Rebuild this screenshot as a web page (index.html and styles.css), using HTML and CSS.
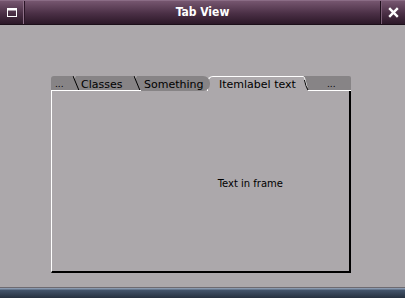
FILE: index.html
```html
<!DOCTYPE html>
<html lang="en">

<head>
	<meta charset="UTF-8" />
	<meta name="viewport" content="width=device-width, initial-scale=1.0" />
	<title>Tab View</title>
	<link rel="stylesheet" href="styles.css">
</head>

<body>
	<div class="window">
		<div class="titlebar">
			<div class="tb-btn">
				<svg width="10" height="9" viewBox="0 0 10 9">
					<rect x="0.5" y="0.5" width="9" height="8" fill="none" stroke="#fff" />
					<rect x="0" y="0" width="10" height="2.5" fill="#fff" />
				</svg>
			</div>
			<div class="title">Tab View</div>
			<div class="tb-btn close">
				<svg width="11" height="11" viewBox="0 0 11 11">
					<path d="M1.2 1.2 L9.8 9.8 M9.8 1.2 L1.2 9.8" stroke="#fff" stroke-width="2.4" />
				</svg>
			</div>
		</div>

		<div class="content">
			<div class="tabview">
				<div class="tabs">
					<div class="tab first">...</div>
					<svg class="sep" width="8" height="15" viewBox="0 0 8 15">
						<rect width="8" height="14" fill="#878486" />
						<path d="M-0.5 0 L4 0 L2.5 3 Z" fill="#aca8ab" />
						<path d="M1 0 L7 14.5" stroke="#000" stroke-width="1" />
						<rect y="14" width="8" height="1" fill="#fff" />
					</svg>
					<div class="tab w-classes">Classes</div>
					<svg class="sep" width="8" height="15" viewBox="0 0 8 15">
						<rect width="8" height="14" fill="#878486" />
						<path d="M-0.5 0 L4 0 L2.5 3 Z" fill="#aca8ab" />
						<path d="M1 0 L7 14.5" stroke="#000" stroke-width="1" />
						<rect y="14" width="8" height="1" fill="#fff" />
					</svg>
					<div class="tab w-something">Something</div>
					<div class="tab active">Itemlabel text</div>
					<svg class="sep" width="9" height="15" viewBox="0 0 9 15">
						<rect width="9" height="14" fill="#878486" />
						<path d="M0 0 L3 0 C5 0 5 5 7 11 L8.5 15 L0 15 Z" fill="#aca8ab" />
						<path d="M0 0.5 L3 0.5 C5 0.5 5 5 7 11" stroke="#fff" fill="none" />
						<path d="M4.5 4 C5.5 8 6 11 8 14" stroke="#000" fill="none" />
						<rect x="8" y="14" width="1" height="1" fill="#fff" />
					</svg>
					<div class="tab last">...</div>
				</div>
				<div class="frame">
					<div class="frame-text">Text in frame</div>
				</div>
			</div>
		</div>

		<div class="statusbar"></div>
	</div>
</body>

</html>
```

FILE: styles.css
```css
body {
	margin: 0;
	font-family: 'DejaVu Sans', sans-serif;
	background-color: #aca8ab;
}

.window {
	width: 405px;
	height: 298px;
	display: flex;
	flex-direction: column;
	overflow: hidden;
}

.titlebar {
	height: 25px;
	display: flex;
	align-items: stretch;
	background: linear-gradient(#76566f, #4a2f45 55%, #2c1828);
	border-top: 1px solid #8a6c85;
	border-bottom: 1px solid #1c0f19;
	box-sizing: border-box;
}

.tb-btn {
	width: 24px;
	display: flex;
	align-items: center;
	justify-content: center;
	border-right: 1px solid #2a1526;
	box-shadow: inset -1px 0 0 #8e7088;
}

.tb-btn.close {
	border-right: none;
	border-left: 1px solid #1e0f1b;
	box-shadow: inset 1px 0 0 #7a5e75;
}

.title {
	flex: 1;
	text-align: center;
	color: #fff;
	font-family: 'DejaVu Sans Condensed', 'DejaVu Sans', sans-serif;
	font-weight: bold;
	font-size: 12px;
	line-height: 23px;
}

.content {
	flex: 1;
	padding: 51px 0 14px 51px;
}

.tabview {
	width: 300px;
	height: 100%;
	display: flex;
	flex-direction: column;
}

.tabs {
	display: flex;
	height: 15px;
	font-size: 11px;
	color: #000;
}

.tab {
	height: 15px;
	line-height: 17px;
	background: #878486;
	border-bottom: 1px solid #fff;
	box-sizing: border-box;
	white-space: nowrap;
	overflow: hidden;
}

.sep {
	display: block;
	flex: none;
}

.tab.first {
	width: 21px;
	border-top-left-radius: 3px;
	font-size: 9px;
	padding-left: 4px;
}

.w-classes {
	width: 53px;
	padding-left: 1px;
}

.w-something {
	width: 69px;
	padding-left: 3px;
	border-top-right-radius: 7px;
	border-bottom-right-radius: 7px;
	border-bottom: none;
	margin-right: -3px;
	position: relative;
	z-index: 1;
}

.tab.active {
	width: 93px;
	background: #aca8ab;
	border-top: 1px solid #fff;
	border-left: 1px solid #fff;
	border-bottom: none;
	border-top-left-radius: 6px;
	padding-left: 11px;
	line-height: 16px;
}

.tab.last {
	flex: 1;
	font-size: 9px;
	border-top-right-radius: 2px;
	padding-left: 18px;
}

.frame {
	flex: 1;
	border-left: 1px solid #fff;
	border-right: 2px solid #000;
	border-bottom: 2px solid #000;
	display: flex;
	align-items: center;
	justify-content: flex-end;
	padding-right: 66px;
}

.frame-text {
	font-size: 10px;
	margin-top: 4px;
}

.statusbar {
	height: 10px;
	background: linear-gradient(#8a9ab0, #8a9ab0 1px, #44556b 2px, #26313f);
	border-top: 1px solid #6d6a70;
}
```
